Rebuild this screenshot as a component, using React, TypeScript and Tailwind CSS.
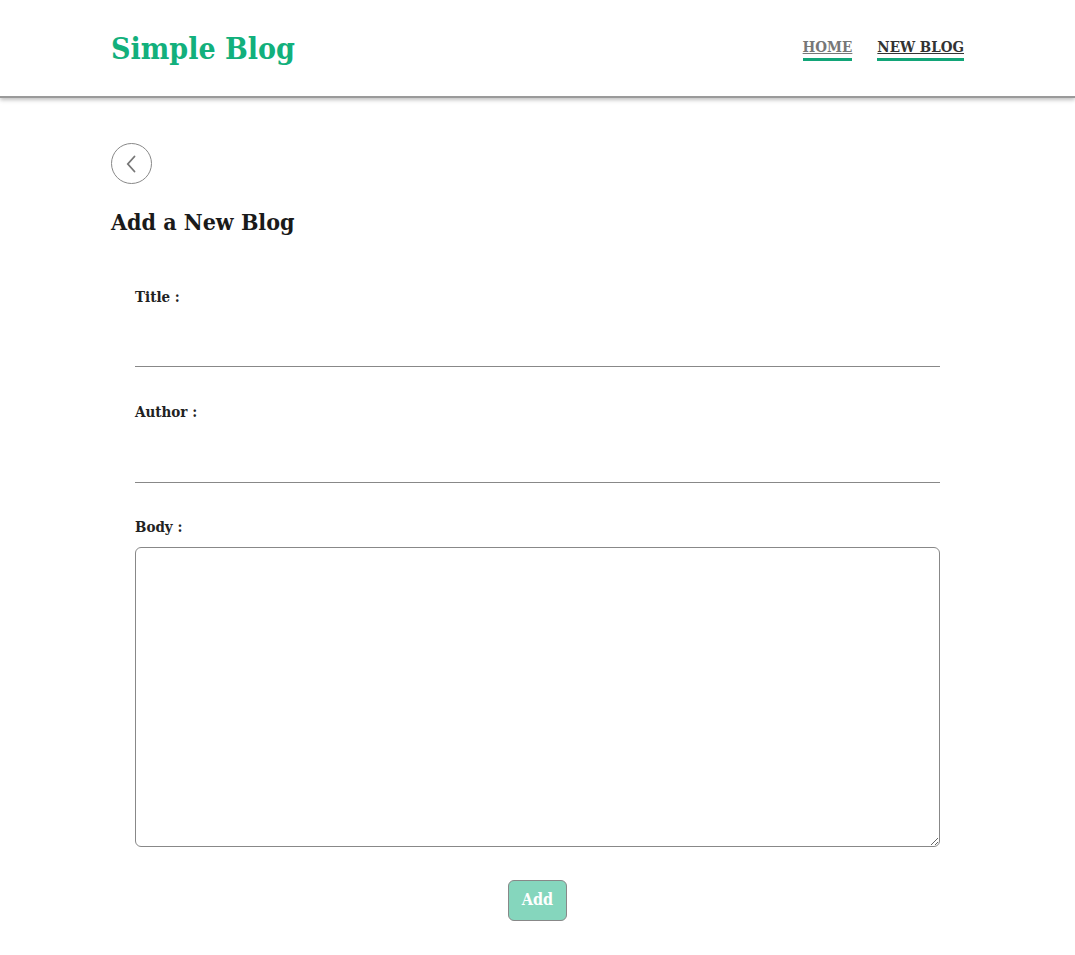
import { useState } from "react";

const slab = { fontFamily: '"DejaVu Serif Condensed", "DejaVu Serif", "Liberation Serif", serif' };

export default function App() {
  const [title, setTitle] = useState("");
  const [author, setAuthor] = useState("");
  const [body, setBody] = useState("");

  return (
    <div className="min-h-screen bg-white text-[#222]" style={slab}>
      {/* header */}
      <header className="h-[98px] border-b-2 border-[#9a9a9a] shadow-[0_2px_4px_rgba(0,0,0,0.25)]">
        <div className="mx-auto flex h-full w-[853px] items-center justify-between">
          <h1 className="text-[30px] font-bold text-[#12b07c]">Simple Blog</h1>
          <nav className="flex gap-[25px] text-[15px] font-bold">
            <a className="border-b-[3px] border-[#12a578] leading-[22px] text-[#777] underline">HOME</a>
            <a className="border-b-[3px] border-[#12a578] leading-[22px] text-[#333] underline">NEW BLOG</a>
          </nav>
        </div>
      </header>

      <main className="mx-auto w-[853px] pt-[45px]">
        <button className="grid h-[41px] w-[41px] place-items-center rounded-full border border-[#888] text-[#777]">
          <svg width="20" height="20" viewBox="0 0 24 24" fill="none" stroke="currentColor" strokeWidth="2.2" strokeLinecap="round">
            <path d="M15 3l-8 9 8 9" />
          </svg>
        </button>
        <h2 className="mt-[21px] text-[23px] font-bold text-[#1a1a1a]">Add a New Blog</h2>

        <form className="px-[24px] pt-[45px]" onSubmit={(e) => e.preventDefault()}>
          <label className="block text-[15px] font-bold leading-[24px]">Title :</label>
          <input
            value={title}
            onChange={(e) => setTitle(e.target.value)}
            className="mt-[18px] block h-[40px] w-full border-b border-[#888] outline-none"
          />
          <label className="mt-[33px] block text-[15px] font-bold leading-[24px]">Author :</label>
          <input
            value={author}
            onChange={(e) => setAuthor(e.target.value)}
            className="mt-[19px] block h-[40px] w-full border-b border-[#888] outline-none"
          />
          <label className="mt-[32px] block text-[15px] font-bold leading-[24px]">Body :</label>
          <textarea
            value={body}
            onChange={(e) => setBody(e.target.value)}
            className="mt-[8px] block h-[300px] w-full rounded-[6px] border border-[#888] outline-none"
          />
          <div className="mt-[33px] flex justify-center">
            <button className="h-[41px] rounded-[6px] border border-[#888] bg-[#85d6bd] px-[13px] text-[16px] font-bold text-white">
              Add
            </button>
          </div>
        </form>
      </main>
    </div>
  );
}
